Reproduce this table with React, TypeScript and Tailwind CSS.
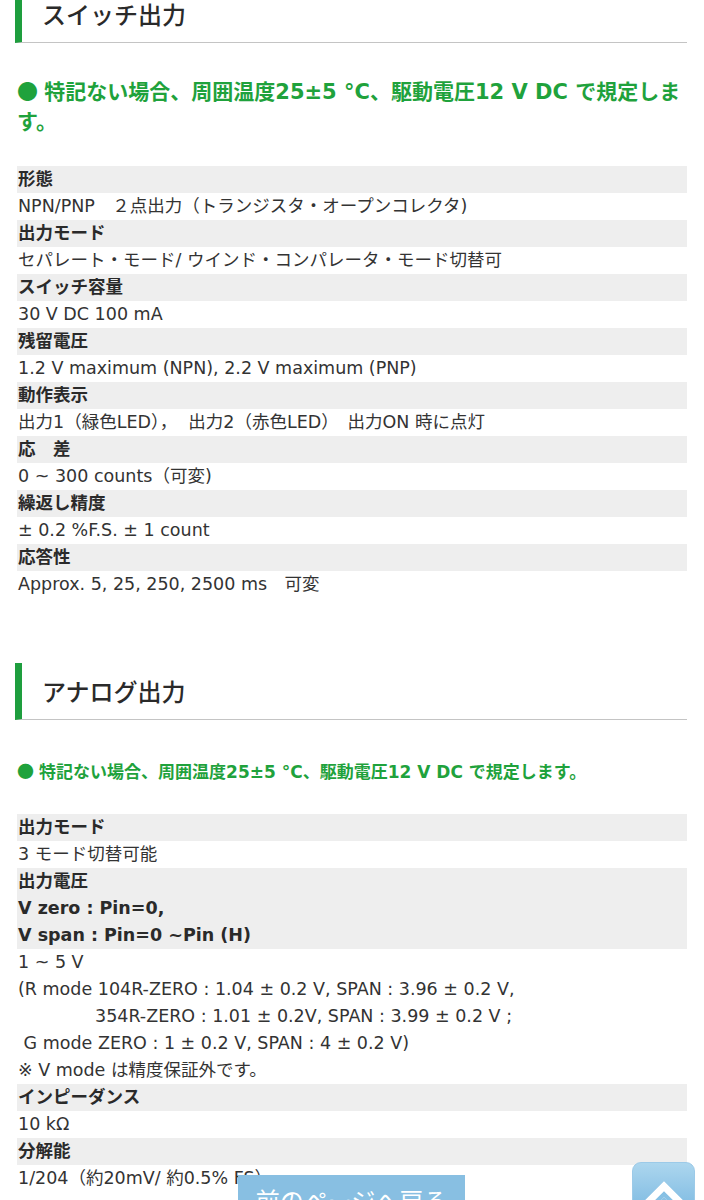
import { ReactNode } from 'react';

const font = { fontFamily: '"DejaVu Sans", "Noto Sans CJK JP", sans-serif' };
const cjk = { fontFamily: '"Noto Sans CJK JP", sans-serif' };

const Heading = ({ children, className = '' }: { children: ReactNode; className?: string }) => (
  <div className={`flex items-center h-[57px] border-l-[7px] border-[#1e9e3e] border-b border-b-[#c4c4c4] pl-[20px] ${className}`}>
    <h2 className="text-[24px] font-medium text-[#2a2a2a] leading-none" style={cjk}>
      {children}
    </h2>
  </div>
);

const Label = ({ children }: { children: ReactNode }) => (
  <div className="bg-[#eeeeee] font-bold text-[#2a2a2a] px-px">{children}</div>
);

const Value = ({ children }: { children: ReactNode }) => (
  <div className="text-[#333] px-px">{children}</div>
);

const Note = ({ className }: { className: string }) => (
  <p className={`pl-[2px] font-bold text-[#1fa23c] ${className}`}>
    <span style={cjk} className="mr-[0.3em]">●</span>特記ない場合、周囲温度25±5 °C、駆動電圧12 V DC で規定します。
  </p>
);

const switchSpecs: [string, string][] = [
  ['形態', 'NPN/PNP\u3000２点出力（トランジスタ・オープンコレクタ)'],
  ['出力モード', 'セパレート・モード/ ウインド・コンパレータ・モード切替可'],
  ['スイッチ容量', '30 V DC 100 mA'],
  ['残留電圧', '1.2 V maximum (NPN), 2.2 V maximum (PNP)'],
  ['動作表示', '出力1（緑色LED），  出力2（赤色LED）\u3000出力ON 時に点灯'],
  ['応\u3000差', '0 ~ 300 counts（可変)'],
  ['繰返し精度', '± 0.2 %F.S. ± 1 count'],
  ['応答性', 'Approx. 5, 25, 250, 2500 ms\u3000可変'],
];

export default function App() {
  return (
    <div className="relative w-[704px] h-[1200px] overflow-hidden bg-white" style={font}>
      <div className="pl-[15px] pr-[17px] -mt-[14px]">
        <Heading>スイッチ出力</Heading>

        <Note className="mt-[32px] text-[21px] leading-[30px]" />

        <div className="mt-[29px] pl-[2px] text-[17.5px] leading-[27px] whitespace-pre-wrap">
          {switchSpecs.map(([label, value]) => (
            <div key={label}>
              <Label>{label}</Label>
              <Value>{value}</Value>
            </div>
          ))}
        </div>

        <Heading className="mt-[65px]">アナログ出力</Heading>

        <Note className="mt-[37px] text-[17px] leading-[27px]" />

        <div className="mt-[28px] pl-[2px] text-[17.5px] leading-[27px] whitespace-pre-wrap">
          <Label>出力モード</Label>
          <Value>3 モード切替可能</Value>
          <Label>
            <div>出力電圧</div>
            <div>V zero : Pin=0,</div>
            <div>V span : Pin=0 ∼Pin (H)</div>
          </Label>
          <Value>
            <div>1 ~ 5 V</div>
            <div>(R mode 104R-ZERO : 1.04 ± 0.2 V, SPAN : 3.96 ± 0.2 V,</div>
            <div className="pl-[77px]">354R-ZERO : 1.01 ± 0.2V, SPAN : 3.99 ± 0.2 V ;</div>
            <div> G mode ZERO : 1 ± 0.2 V, SPAN : 4 ± 0.2 V)</div>
            <div>※ V mode は精度保証外です。</div>
          </Value>
          <Label>インピーダンス</Label>
          <Value>10 kΩ</Value>
          <Label>分解能</Label>
          <Value>1/204（約20mV/ 約0.5% FS）</Value>
        </div>
      </div>

      <button className="absolute left-[238px] top-[1175px] w-[227px] h-[50px] bg-[#88bfe2] text-white text-[24px] leading-[50px] text-center" style={cjk}>
        前のページへ戻る
      </button>

      <button className="absolute left-[632px] top-[1162px] w-[63px] h-[63px] rounded-[9px] border border-[#9ccae8] overflow-hidden bg-gradient-to-b from-[#acd6ee] via-[#8ec4e6] to-[#74b4df] flex items-start justify-center pt-[14px]">
        <svg width="44" height="34" viewBox="0 0 44 34" fill="none">
          <path d="M6 28 L22 12 L38 28" stroke="white" strokeWidth="11" strokeLinejoin="miter" />
          <path d="M9 30 L22 17 L35 30" stroke="#86c0e4" strokeWidth="4" strokeLinejoin="miter" />
        </svg>
      </button>
    </div>
  );
}
